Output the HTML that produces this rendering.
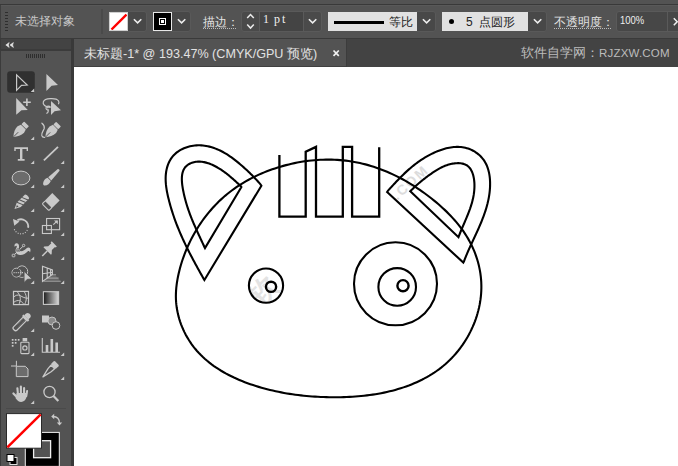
<!DOCTYPE html>
<html><head><meta charset="utf-8">
<style>
*{margin:0;padding:0;box-sizing:border-box}
html,body{width:678px;height:466px;overflow:hidden;background:#535353;font-family:"Liberation Sans",sans-serif;position:relative}
.a{position:absolute}
#topband{left:0;top:0;width:678px;height:5px;background:#535353;border-bottom:1px solid #393939}
#bar{left:0;top:5px;width:678px;height:33px;background:#535353;border-top:1px solid #595959}
#barb{left:0;top:38px;width:678px;height:1px;background:#3a3a3a}
#lhead{left:0;top:39px;width:71px;height:10px;background:#434343}
#lheadb{left:0;top:49px;width:71px;height:2px;background:#3b3b3b}
#lpanel{left:0;top:51px;width:71px;height:415px;background:#535353}
#gutter{left:71px;top:39px;width:3px;height:427px;background:#393939}
#tabbar{left:74px;top:39px;width:604px;height:28px;background:#535353}
#canvas{left:74px;top:67px;width:604px;height:399px;background:#fff}
.txt{color:#d0d0d0;font-size:12px;line-height:14px;white-space:nowrap}
</style></head><body>
<div class="a" id="topband"></div>
<div class="a" id="bar"></div>
<div class="a" id="barb"></div>
<div class="a" id="lhead"></div>
<div class="a" id="lheadb"></div>
<div class="a" id="lpanel"></div>
<div class="a" id="gutter"></div>
<div class="a" id="tabbar"></div>
<div class="a" id="canvas"></div>
<!--DRAW-->
<svg class="a" style="left:0;top:0" width="678" height="466" viewBox="0 0 678 466">
<g font-family="Liberation Sans, sans-serif" font-weight="bold" fill="#e3e3e3" text-anchor="middle">
<text x="0" y="0" font-size="14" letter-spacing="1.8" transform="translate(413.5,186) rotate(-42)" fill="#dcdcdc">.COM</text>
<clipPath id="eyeclip"><circle cx="266" cy="285.6" r="16.5"/></clipPath><g clip-path="url(#eyeclip)"><text x="0" y="0" font-size="28" font-weight="900" transform="translate(270,298) rotate(-45)" fill="#e3e3e3">软</text></g>
</g>
<g fill="none" stroke="#000" stroke-width="2.1" stroke-linejoin="miter">
<path d="M274.99,168.40 L277.74,167.51 L280.50,166.67 L283.27,165.87 L286.06,165.12 L288.86,164.41 L291.67,163.75 L294.49,163.14 L297.32,162.57 L300.16,162.06 L303.00,161.58 L305.85,161.16 L308.71,160.79 L311.57,160.47 L314.43,160.20 L317.30,159.97 L320.17,159.80 L323.03,159.68 L325.90,159.62 L328.77,159.60 L331.63,159.64 L334.49,159.73 L337.34,159.88 L340.19,160.08 L343.04,160.33 L345.87,160.64 L348.70,161.01 L351.52,161.43 L354.33,161.91 L357.12,162.44 L359.91,163.03 L362.68,163.68 L365.45,164.38 L368.20,165.13 L370.93,165.93 L373.66,166.79 L376.37,167.69 L379.06,168.65 L381.74,169.65 L384.41,170.70 L387.05,171.79 L389.69,172.94 L392.30,174.12 L394.90,175.35 L397.48,176.63 L400.05,177.95 L402.59,179.30 L405.12,180.70 L407.63,182.14 L410.11,183.62 L412.58,185.13 L415.03,186.68 L417.45,188.27 L419.86,189.90 L422.24,191.56 L424.60,193.25 L426.93,194.97 L429.25,196.73 L431.54,198.52 L433.80,200.34 L436.04,202.18 L438.25,204.06 L440.44,205.97 L442.59,207.91 L444.71,209.88 L446.79,211.88 L448.83,213.92 L450.83,215.99 L452.79,218.09 L454.70,220.23 L456.57,222.40 L458.38,224.61 L460.15,226.86 L461.85,229.14 L463.50,231.46 L465.09,233.82 L466.62,236.22 L468.08,238.65 L469.48,241.13 L470.81,243.65 L472.06,246.21 L473.25,248.81 L474.36,251.44 L475.39,254.11 L476.35,256.81 L477.22,259.54 L478.02,262.29 L478.74,265.06 L479.37,267.86 L479.92,270.67 L480.39,273.50 L480.76,276.35 L481.05,279.20 L481.25,282.05 L481.35,284.92 L481.37,287.78 L481.29,290.65 L481.13,293.51 L480.87,296.37 L480.53,299.22 L480.11,302.06 L479.60,304.89 L479.00,307.71 L478.33,310.52 L477.57,313.30 L476.74,316.07 L475.83,318.82 L474.84,321.54 L473.78,324.23 L472.65,326.90 L471.44,329.53 L470.16,332.14 L468.81,334.71 L467.40,337.24 L465.91,339.73 L464.37,342.18 L462.76,344.59 L461.08,346.95 L459.34,349.27 L457.55,351.53 L455.69,353.75 L453.78,355.91 L451.81,358.01 L449.79,360.05 L447.71,362.04 L445.58,363.96 L443.41,365.81 L441.18,367.60 L438.90,369.33 L436.59,371.00 L434.23,372.60 L431.83,374.14 L429.39,375.63 L426.92,377.05 L424.42,378.42 L421.89,379.73 L419.33,380.98 L416.75,382.18 L414.13,383.33 L411.50,384.42 L408.84,385.46 L406.16,386.44 L403.46,387.38 L400.73,388.27 L397.99,389.11 L395.23,389.90 L392.45,390.64 L389.66,391.34 L386.85,392.00 L384.03,392.61 L381.20,393.18 L378.35,393.71 L375.50,394.19 L372.64,394.64 L369.76,395.04 L366.88,395.41 L364.00,395.75 L361.11,396.04 L358.21,396.30 L355.31,396.53 L352.41,396.73 L349.51,396.89 L346.61,397.02 L343.72,397.12 L340.82,397.19 L337.93,397.23 L335.04,397.25 L332.16,397.24 L329.29,397.20 L326.42,397.14 L323.56,397.06 L320.71,396.95 L317.87,396.81 L315.03,396.65 L312.19,396.46 L309.37,396.24 L306.54,395.99 L303.72,395.71 L300.90,395.41 L298.09,395.07 L295.28,394.71 L292.47,394.31 L289.66,393.88 L286.85,393.42 L284.04,392.92 L281.23,392.40 L278.42,391.83 L275.61,391.23 L272.79,390.60 L269.98,389.93 L267.16,389.23 L264.34,388.48 L261.52,387.70 L258.70,386.88 L255.90,386.02 L253.10,385.11 L250.31,384.17 L247.54,383.18 L244.79,382.15 L242.05,381.07 L239.34,379.95 L236.65,378.78 L233.98,377.57 L231.35,376.30 L228.75,374.99 L226.18,373.63 L223.64,372.21 L221.15,370.75 L218.70,369.23 L216.29,367.66 L213.93,366.03 L211.62,364.35 L209.36,362.61 L207.15,360.81 L205.00,358.96 L202.90,357.05 L200.87,355.08 L198.90,353.04 L197.00,350.95 L195.17,348.79 L193.41,346.57 L191.72,344.30 L190.10,341.96 L188.57,339.57 L187.11,337.13 L185.73,334.64 L184.43,332.11 L183.22,329.53 L182.09,326.92 L181.05,324.27 L180.10,321.58 L179.24,318.87 L178.48,316.13 L177.81,313.37 L177.23,310.58 L176.76,307.78 L176.38,304.96 L176.11,302.13 L175.94,299.29 L175.88,296.45 L175.92,293.60 L176.06,290.75 L176.28,287.90 L176.60,285.06 L176.99,282.21 L177.47,279.37 L178.01,276.54 L178.62,273.72 L179.29,270.91 L180.02,268.11 L180.81,265.32 L181.65,262.55 L182.54,259.80 L183.49,257.07 L184.48,254.35 L185.54,251.65 L186.64,248.98 L187.79,246.32 L189.00,243.69 L190.25,241.09 L191.56,238.51 L192.91,235.96 L194.31,233.43 L195.76,230.93 L197.26,228.47 L198.80,226.03 L200.40,223.63 L202.03,221.26 L203.72,218.92 L205.45,216.62 L207.22,214.36 L209.04,212.13 L210.90,209.95 L212.80,207.80 L214.74,205.70 L216.73,203.63 L218.76,201.62 L220.83,199.64 L222.94,197.71 L225.09,195.83 L227.28,194.00 L229.51,192.22 L231.78,190.48 L234.08,188.80 L236.42,187.16 L238.80,185.58 L241.21,184.05 L243.65,182.56 L246.12,181.12 L248.62,179.73 L251.15,178.39 L253.71,177.10 L256.29,175.85 L258.90,174.65 L261.53,173.49 L264.18,172.38 L266.86,171.32 L269.55,170.30 L272.27,169.33 L274.99,168.40Z"/>
<path d="M261.40,185.70 L204.40,280.00 L203.60,278.66 L202.79,277.23 L201.98,275.80 L201.18,274.37 L200.38,272.94 L199.58,271.52 L198.79,270.10 L198.01,268.68 L197.22,267.26 L196.45,265.84 L195.67,264.43 L194.91,263.01 L194.14,261.60 L193.39,260.19 L192.63,258.77 L191.89,257.36 L191.15,255.95 L190.41,254.53 L189.68,253.12 L188.96,251.70 L188.25,250.28 L187.54,248.86 L186.83,247.44 L186.14,246.02 L185.45,244.59 L184.77,243.17 L184.09,241.74 L183.42,240.30 L182.76,238.87 L182.11,237.43 L181.47,235.98 L180.83,234.53 L180.20,233.08 L179.58,231.63 L178.97,230.17 L178.37,228.70 L177.77,227.23 L177.19,225.75 L176.61,224.27 L176.05,222.78 L175.49,221.29 L174.94,219.79 L174.40,218.28 L173.87,216.77 L173.36,215.25 L172.85,213.72 L172.35,212.19 L171.86,210.65 L171.39,209.10 L170.92,207.54 L170.46,205.97 L170.02,204.39 L169.59,202.81 L169.16,201.22 L168.75,199.61 L168.36,198.00 L167.97,196.38 L167.61,194.75 L167.27,193.12 L166.95,191.48 L166.66,189.84 L166.40,188.20 L166.17,186.56 L165.98,184.92 L165.83,183.29 L165.72,181.65 L165.66,180.02 L165.64,178.40 L165.68,176.79 L165.77,175.18 L165.91,173.58 L166.12,172.00 L166.39,170.43 L166.72,168.87 L167.11,167.34 L167.57,165.84 L168.10,164.37 L168.69,162.93 L169.35,161.54 L170.08,160.18 L170.88,158.88 L171.76,157.62 L172.70,156.42 L173.72,155.28 L174.80,154.20 L175.95,153.17 L177.15,152.21 L178.41,151.30 L179.72,150.46 L181.08,149.68 L182.48,148.96 L183.93,148.30 L185.41,147.71 L186.92,147.18 L188.45,146.71 L190.02,146.31 L191.60,145.98 L193.20,145.71 L194.81,145.51 L196.43,145.37 L198.06,145.31 L199.68,145.31 L201.31,145.38 L202.93,145.51 L204.55,145.71 L206.16,145.96 L207.76,146.28 L209.35,146.64 L210.93,147.06 L212.50,147.53 L214.05,148.05 L215.59,148.61 L217.10,149.22 L218.60,149.86 L220.07,150.55 L221.53,151.27 L222.96,152.02 L224.38,152.81 L225.77,153.63 L227.15,154.48 L228.51,155.36 L229.85,156.26 L231.18,157.19 L232.50,158.13 L233.79,159.10 L235.08,160.09 L236.35,161.09 L237.61,162.11 L238.85,163.14 L240.09,164.18 L241.31,165.23 L242.53,166.28 L243.73,167.35 L244.92,168.42 L246.11,169.50 L247.28,170.59 L248.44,171.69 L249.59,172.79 L250.73,173.91 L251.86,175.03 L252.98,176.16 L254.08,177.30 L255.18,178.44 L256.26,179.60 L257.34,180.76 L258.40,181.93 L259.45,183.12 L260.48,184.31 L261.40,185.70Z"/>
<path d="M241.40,187.00 L205.00,248.10 L204.52,247.19 L204.08,246.23 L203.63,245.27 L203.19,244.31 L202.74,243.36 L202.30,242.41 L201.86,241.46 L201.42,240.52 L200.99,239.59 L200.55,238.65 L200.12,237.72 L199.69,236.79 L199.26,235.87 L198.83,234.94 L198.40,234.02 L197.98,233.10 L197.56,232.19 L197.14,231.27 L196.72,230.36 L196.31,229.44 L195.90,228.53 L195.49,227.62 L195.09,226.70 L194.69,225.79 L194.29,224.88 L193.89,223.97 L193.50,223.05 L193.12,222.14 L192.73,221.22 L192.35,220.31 L191.98,219.39 L191.60,218.47 L191.24,217.54 L190.87,216.62 L190.51,215.69 L190.16,214.76 L189.81,213.83 L189.46,212.89 L189.12,211.95 L188.79,211.01 L188.46,210.06 L188.13,209.11 L187.81,208.15 L187.49,207.19 L187.18,206.23 L186.88,205.26 L186.58,204.28 L186.29,203.30 L186.00,202.31 L185.72,201.32 L185.45,200.32 L185.18,199.32 L184.91,198.30 L184.66,197.29 L184.41,196.26 L184.17,195.23 L183.93,194.18 L183.70,193.13 L183.48,192.08 L183.26,191.01 L183.06,189.94 L182.86,188.86 L182.67,187.78 L182.50,186.69 L182.34,185.61 L182.21,184.52 L182.09,183.44 L181.99,182.37 L181.92,181.30 L181.87,180.25 L181.85,179.20 L181.86,178.17 L181.90,177.15 L181.98,176.15 L182.09,175.17 L182.24,174.21 L182.43,173.27 L182.66,172.36 L182.93,171.47 L183.25,170.61 L183.61,169.78 L184.03,168.98 L184.50,168.22 L185.02,167.49 L185.60,166.81 L186.23,166.16 L186.91,165.55 L187.65,164.98 L188.43,164.45 L189.25,163.97 L190.11,163.53 L191.00,163.13 L191.93,162.77 L192.88,162.47 L193.85,162.20 L194.84,161.98 L195.85,161.81 L196.87,161.69 L197.90,161.62 L198.93,161.59 L199.97,161.61 L201.01,161.68 L202.05,161.79 L203.08,161.94 L204.12,162.14 L205.16,162.36 L206.19,162.63 L207.22,162.92 L208.24,163.25 L209.25,163.61 L210.26,163.99 L211.26,164.40 L212.26,164.83 L213.24,165.28 L214.21,165.75 L215.17,166.24 L216.11,166.74 L217.04,167.26 L217.96,167.79 L218.86,168.32 L219.75,168.87 L220.62,169.42 L221.48,169.98 L222.33,170.56 L223.17,171.14 L223.99,171.73 L224.81,172.32 L225.61,172.93 L226.41,173.54 L227.20,174.16 L227.99,174.78 L228.76,175.41 L229.53,176.05 L230.30,176.69 L231.06,177.34 L231.81,177.99 L232.57,178.65 L233.32,179.31 L234.07,179.98 L234.81,180.65 L235.56,181.33 L236.31,182.00 L237.05,182.68 L237.80,183.37 L238.56,184.05 L239.31,184.74 L240.07,185.43 L240.83,186.12 L241.40,187.00Z"/>
<path d="M387.10,192.10 L463.30,262.60 L464.00,261.21 L464.53,259.82 L465.08,258.44 L465.63,257.06 L466.20,255.67 L466.78,254.29 L467.37,252.92 L467.97,251.54 L468.58,250.16 L469.19,248.79 L469.82,247.41 L470.44,246.03 L471.07,244.66 L471.71,243.28 L472.35,241.91 L472.99,240.53 L473.63,239.15 L474.27,237.77 L474.91,236.39 L475.55,235.01 L476.19,233.63 L476.83,232.24 L477.46,230.85 L478.08,229.46 L478.70,228.07 L479.31,226.68 L479.92,225.28 L480.51,223.88 L481.10,222.47 L481.68,221.07 L482.24,219.65 L482.79,218.24 L483.33,216.82 L483.86,215.39 L484.37,213.96 L484.86,212.53 L485.34,211.09 L485.80,209.65 L486.25,208.20 L486.67,206.74 L487.07,205.28 L487.46,203.82 L487.82,202.34 L488.15,200.86 L488.47,199.38 L488.76,197.89 L489.02,196.39 L489.26,194.88 L489.47,193.36 L489.65,191.84 L489.80,190.31 L489.92,188.77 L490.02,187.23 L490.08,185.67 L490.10,184.12 L490.09,182.56 L490.04,181.01 L489.95,179.46 L489.82,177.92 L489.64,176.39 L489.42,174.87 L489.15,173.37 L488.84,171.88 L488.47,170.42 L488.05,168.97 L487.58,167.55 L487.05,166.16 L486.46,164.80 L485.81,163.47 L485.10,162.18 L484.33,160.93 L483.49,159.71 L482.59,158.54 L481.63,157.42 L480.61,156.34 L479.54,155.31 L478.42,154.33 L477.26,153.40 L476.05,152.53 L474.81,151.72 L473.53,150.96 L472.23,150.27 L470.89,149.63 L469.54,149.07 L468.16,148.57 L466.77,148.14 L465.36,147.77 L463.94,147.47 L462.51,147.24 L461.06,147.07 L459.61,146.95 L458.14,146.90 L456.67,146.90 L455.19,146.95 L453.71,147.06 L452.22,147.23 L450.73,147.44 L449.23,147.69 L447.74,148.00 L446.25,148.35 L444.76,148.74 L443.27,149.17 L441.78,149.64 L440.30,150.15 L438.83,150.70 L437.36,151.27 L435.90,151.89 L434.45,152.53 L433.02,153.20 L431.59,153.89 L430.18,154.62 L428.78,155.36 L427.40,156.13 L426.03,156.92 L424.69,157.72 L423.36,158.54 L422.05,159.38 L420.77,160.23 L419.50,161.09 L418.25,161.97 L417.03,162.86 L415.82,163.76 L414.63,164.67 L413.45,165.60 L412.29,166.53 L411.15,167.48 L410.01,168.44 L408.89,169.41 L407.79,170.39 L406.69,171.38 L405.61,172.38 L404.53,173.39 L403.46,174.41 L402.40,175.45 L401.35,176.49 L400.30,177.54 L399.26,178.59 L398.23,179.66 L397.19,180.74 L396.16,181.82 L395.13,182.92 L394.10,184.02 L393.07,185.12 L392.05,186.24 L391.01,187.36 L389.98,188.49 L388.94,189.63 L387.90,190.78 L387.10,192.10Z"/>
<path d="M410.30,191.20 L458.50,237.20 L458.84,236.26 L459.16,235.38 L459.50,234.50 L459.84,233.62 L460.19,232.75 L460.54,231.87 L460.90,230.99 L461.26,230.12 L461.62,229.24 L461.99,228.37 L462.36,227.49 L462.74,226.61 L463.11,225.73 L463.49,224.86 L463.87,223.98 L464.25,223.10 L464.63,222.22 L465.00,221.34 L465.38,220.45 L465.76,219.57 L466.13,218.69 L466.50,217.80 L466.87,216.91 L467.24,216.02 L467.60,215.13 L467.96,214.24 L468.31,213.34 L468.66,212.45 L469.01,211.55 L469.34,210.65 L469.67,209.74 L470.00,208.84 L470.31,207.93 L470.62,207.02 L470.92,206.10 L471.21,205.19 L471.49,204.27 L471.77,203.34 L472.03,202.42 L472.28,201.49 L472.52,200.55 L472.75,199.62 L472.96,198.68 L473.17,197.73 L473.36,196.78 L473.53,195.83 L473.70,194.88 L473.84,193.92 L473.98,192.95 L474.10,191.98 L474.20,191.01 L474.28,190.03 L474.35,189.05 L474.40,188.06 L474.44,187.07 L474.45,186.07 L474.45,185.07 L474.43,184.07 L474.39,183.06 L474.32,182.06 L474.23,181.06 L474.13,180.07 L473.99,179.09 L473.84,178.11 L473.65,177.15 L473.44,176.21 L473.21,175.28 L472.94,174.37 L472.65,173.48 L472.33,172.61 L471.98,171.77 L471.60,170.96 L471.18,170.17 L470.74,169.42 L470.26,168.71 L469.74,168.03 L469.19,167.38 L468.61,166.78 L467.98,166.22 L467.32,165.71 L466.63,165.24 L465.89,164.82 L465.11,164.45 L464.30,164.13 L463.45,163.86 L462.58,163.64 L461.67,163.46 L460.74,163.32 L459.79,163.23 L458.83,163.17 L457.84,163.16 L456.85,163.18 L455.84,163.24 L454.83,163.33 L453.82,163.46 L452.80,163.61 L451.79,163.80 L450.79,164.02 L449.79,164.26 L448.81,164.53 L447.83,164.82 L446.88,165.13 L445.93,165.47 L445.00,165.83 L444.08,166.21 L443.17,166.60 L442.27,167.02 L441.39,167.45 L440.51,167.89 L439.65,168.35 L438.79,168.83 L437.94,169.31 L437.11,169.81 L436.28,170.32 L435.45,170.83 L434.64,171.36 L433.83,171.89 L433.03,172.42 L432.24,172.97 L431.45,173.51 L430.67,174.06 L429.89,174.61 L429.12,175.16 L428.36,175.72 L427.60,176.27 L426.84,176.84 L426.09,177.40 L425.34,177.97 L424.59,178.54 L423.85,179.12 L423.12,179.70 L422.39,180.29 L421.66,180.88 L420.93,181.48 L420.21,182.08 L419.49,182.69 L418.77,183.31 L418.05,183.93 L417.34,184.56 L416.63,185.19 L415.92,185.83 L415.21,186.48 L414.50,187.13 L413.80,187.80 L413.10,188.47 L412.39,189.15 L411.69,189.83 L410.99,190.53 L410.30,191.20Z"/>
<path d="M279.4,155 L279.4,216.7 L305.7,216.7 L305.7,151.7 L316,146.9 L316,216.7 L342.8,216.7 L342.8,146.9 L352.1,146.9 L352.1,216.7 L379.2,216.7 L379.2,147.2" stroke-width="2.3"/>
<circle cx="266" cy="285.6" r="17.1"/>
<circle cx="271.05" cy="286.8" r="5.1" stroke-width="2.4"/>
<circle cx="395.5" cy="283.8" r="41.5"/>
<circle cx="397.2" cy="286.9" r="18.8"/>
<circle cx="403" cy="285.7" r="5.6" stroke-width="2.4"/>
</g></svg>
<!--/DRAW-->

<!--UI-->
<div class="a" style="left:0;top:5px;width:1px;height:33px;background:#3f3f3f"></div>
<div class="a" style="left:5px;top:12px;width:3px;height:20px;background:repeating-linear-gradient(#2e2e2e 0 1px,transparent 1px 3px)"></div>
<div class="a txt" style="left:15px;top:14px;color:#c8c8c8">未选择对象</div>
<div class="a" style="left:101px;top:9px;width:2px;height:25px;background:#4a4a4a"></div>
<!-- fill swatch -->
<div class="a" style="left:108px;top:11px;width:39px;height:21px;border-radius:3px;background:#484848;border:1px solid #595959"></div>
<div class="a" style="left:108.5px;top:12px;width:19.5px;height:19px;background:#fff;border:1px solid #cfcfcf;overflow:hidden">
<svg width="18" height="18" style="position:absolute;left:0;top:0"><line x1="1.5" y1="16.5" x2="16.5" y2="1.5" stroke="#f00" stroke-width="2.4"/></svg></div>
<svg class="a" style="left:133px;top:18px" width="10" height="7"><polyline points="0.9,1.2 4.6,4.9 8.3,1.2" fill="none" stroke="#ededed" stroke-width="1.6"/></svg>
<!-- stroke swatch -->
<div class="a" style="left:153px;top:11px;width:38px;height:21px;border-radius:3px;background:#484848;border:1px solid #595959"></div>
<div class="a" style="left:153px;top:12px;width:19px;height:19px;background:#000;border:1px solid #e8e8e8"></div>
<div class="a" style="left:158.8px;top:17.7px;width:7.4px;height:7.4px;border:1.3px solid #fff"></div>
<div class="a" style="left:161px;top:19.9px;width:3px;height:3px;background:#fff"></div>
<svg class="a" style="left:177px;top:18px" width="10" height="7"><polyline points="0.9,1.2 4.6,4.9 8.3,1.2" fill="none" stroke="#ededed" stroke-width="1.6"/></svg>
<!-- stroke weight -->
<div class="a txt" style="left:203px;top:15px;color:#e4e4e4">描边：</div>
<div class="a" style="left:203px;top:28px;width:34px;height:1px;background:repeating-linear-gradient(90deg,#bbb 0 1px,transparent 1px 2px)"></div>
<div class="a" style="left:241px;top:11px;width:81px;height:21px;border-radius:3px;background:#4a4a4a;border:1px solid #5a5a5a"></div>
<div class="a" style="left:259px;top:12px;width:45px;height:19px;background:#444"></div>
<div class="a" style="left:303px;top:12px;width:1px;height:19px;background:#5a5a5a"></div>
<div class="a" style="left:259px;top:12px;width:1px;height:19px;background:#5a5a5a"></div>
<svg class="a" style="left:245px;top:13px" width="11" height="17"><polyline points="2.2,5 5.5,1.5 8.8,5" fill="none" stroke="#ececec" stroke-width="1.5"/><polyline points="2.2,11.5 5.5,15.1 8.8,11.5" fill="none" stroke="#ececec" stroke-width="1.5"/></svg>
<div class="a txt" style="left:263px;top:12px;font-family:'Liberation Serif',serif;color:#f0f0f0;font-size:12px">1</div><div class="a txt" style="left:274px;top:12px;font-family:'Liberation Serif',serif;color:#f0f0f0;font-size:12px">p</div><div class="a txt" style="left:282px;top:12px;font-family:'Liberation Serif',serif;color:#f0f0f0;font-size:12px">t</div>
<svg class="a" style="left:308px;top:18px" width="10" height="7"><polyline points="0.9,1.2 4.6,4.9 8.3,1.2" fill="none" stroke="#ededed" stroke-width="1.6"/></svg>
<!-- profile -->
<div class="a" style="left:414px;top:11px;width:22px;height:21px;border-radius:3px;background:#484848;border:1px solid #595959"></div>
<div class="a" style="left:328px;top:12px;width:89px;height:19px;background:#e1e1e1"></div>
<div class="a" style="left:334px;top:20.5px;width:50px;height:3.5px;background:#000"></div>
<div class="a txt" style="left:389px;top:15px;color:#222">等比</div>
<svg class="a" style="left:422px;top:18px" width="10" height="7"><polyline points="0.9,1.2 4.6,4.9 8.3,1.2" fill="none" stroke="#ededed" stroke-width="1.6"/></svg>
<!-- brush -->
<div class="a" style="left:525px;top:11px;width:22px;height:21px;border-radius:3px;background:#484848;border:1px solid #595959"></div>
<div class="a" style="left:442px;top:12px;width:86px;height:19px;background:#e1e1e1"></div>
<div class="a" style="left:449px;top:19px;width:5px;height:5px;border-radius:50%;background:#000"></div>
<div class="a txt" style="left:466px;top:15px;color:#222">5 &nbsp;点圆形</div>
<svg class="a" style="left:533px;top:18px" width="10" height="7"><polyline points="0.9,1.2 4.6,4.9 8.3,1.2" fill="none" stroke="#ededed" stroke-width="1.6"/></svg>
<!-- opacity -->
<div class="a txt" style="left:554px;top:15px;color:#e4e4e4">不透明度：</div>
<div class="a" style="left:554px;top:28px;width:57px;height:1px;background:repeating-linear-gradient(90deg,#bbb 0 1px,transparent 1px 2px)"></div>
<div class="a" style="left:616px;top:11px;width:70px;height:21px;border-radius:3px;background:#474747;border:1px solid #5a5a5a"></div>
<div class="a" style="left:667px;top:12px;width:1px;height:20px;background:#5a5a5a"></div>
<div class="a txt" style="left:620px;top:13px;color:#eee;font-size:11px;transform:scaleX(0.86);transform-origin:0 0">100%</div>
<svg class="a" style="left:672px;top:17px" width="6" height="10"><polyline points="1.8,1.2 5.2,4.7 1.8,8.2" fill="none" stroke="#f0f0f0" stroke-width="1.5"/></svg>
<!-- tab bar -->
<div class="a" style="left:74px;top:66px;width:604px;height:1px;background:#404040"></div>
<div class="a" style="left:346px;top:39px;width:332px;height:28px;background:#434343;border-left:1px solid #3c3c3c"></div>
<div class="a txt" style="left:84px;top:47px;font-size:12.6px;color:#e2e2e2">未标题-1* @ 193.47% (CMYK/GPU 预览)</div>
<svg class="a" style="left:332px;top:49px" width="8" height="8"><path d="M1.5,1.5 L6.8,6.8 M6.8,1.5 L1.5,6.8" stroke="#f2f2f2" stroke-width="1.7"/></svg>
<div class="a txt" style="left:521px;top:46px;font-size:12.5px;color:#bcbcbc">软件自学网：</div><div class="a txt" style="left:599px;top:46px;font-size:11.5px;color:#bcbcbc;letter-spacing:0.2px;-webkit-font-smoothing:antialiased">RJZXW.COM</div>
<!-- left panel header -->
<svg class="a" style="left:5px;top:41px" width="10" height="8"><path d="M0.8,4 L4.2,1.6 L3.4,4 L4.2,6.4Z M5,4 L8.4,1.6 L7.6,4 L8.4,6.4Z" fill="#e6e6e6" stroke="#e6e6e6" stroke-width="0.6" stroke-linejoin="round"/></svg>
<div class="a" style="left:0;top:39px;width:1px;height:427px;background:#3b3b3b"></div>
<div class="a" style="left:26px;top:54px;width:19px;height:4px;background:repeating-linear-gradient(90deg,#2e2e2e 0 1px,transparent 1px 2px)"></div>
<!--TOOLS-->
<svg class="a" style="left:0;top:0" width="72" height="466" viewBox="0 0 72 466">
<g fill="#c9c9c9">
<!-- corner triangles -->
<path d="M34.2,88.6 V92.1 H30.7Z"/>
<path d="M34.2,136.6 V140.1 H30.7Z"/>
<path d="M34.2,160.6 V164.1 H30.7Z"/><path d="M64.2,160.6 V164.1 H60.7Z"/>
<path d="M34.2,184.6 V188.1 H30.7Z"/><path d="M64.2,184.6 V188.1 H60.7Z"/>
<path d="M34.2,208.6 V212.1 H30.7Z"/><path d="M64.2,208.6 V212.1 H60.7Z"/>
<path d="M34.2,232.6 V236.1 H30.7Z"/><path d="M64.2,232.6 V236.1 H60.7Z"/>
<path d="M34.2,256.6 V260.1 H30.7Z"/><path d="M64.2,256.6 V260.1 H60.7Z"/>
<path d="M34.2,280.6 V284.1 H30.7Z"/><path d="M64.2,280.6 V284.1 H60.7Z"/>
<path d="M34.2,328.6 V332.1 H30.7Z"/>
<path d="M34.2,352.6 V356.1 H30.7Z"/><path d="M64.2,352.6 V356.1 H60.7Z"/>
<path d="M64.2,376.6 V380.1 H60.7Z"/>
<path d="M34.2,400.6 V404.1 H30.7Z"/>
</g>
<rect x="7.2" y="71.2" width="27.6" height="21.5" rx="3" fill="#303030"/>
<path d="M34.2,88.6 V92.1 H30.7Z" fill="#c9c9c9"/>
<!-- selection -->
<path d="M16.6,74.9 L27.2,85 L21.5,85.4 L16.6,90.3Z" fill="none" stroke="#c9c9c9" stroke-width="1.2" stroke-linejoin="miter"/>
<!-- direct selection -->
<path d="M46.4,74.1 L58,85.1 L51.6,85.7 L46.4,91Z" fill="#c9c9c9"/>
<!-- group selection -->
<path d="M16.2,97.9 L27.8,110 L21.5,110.3 L16.2,114.7Z" fill="#c9c9c9"/>
<path d="M26.9,98.5 V106 M23.2,102.2 H30.8" stroke="#c9c9c9" stroke-width="1.6"/>
<!-- lasso -->
<path d="M51,101 L61,110.2 L54.6,111.2 L51,114.9Z" fill="#c9c9c9"/>
<path d="M50.5,107.3 C45,107 42.5,104.5 43.3,101.8 C44.5,98 56,97.5 58.5,100.8 C59.3,102 58.8,103.5 58.4,104.2" fill="none" stroke="#c9c9c9" stroke-width="1.2"/>
<path d="M50.5,107.3 C49.5,105.8 46.5,105.6 46,107.6 C45.6,109.3 47.5,110.4 49,109.8 M48,110.2 C48.6,111.6 48,112.8 46.4,113.6" fill="none" stroke="#c9c9c9" stroke-width="1.1"/><circle cx="47.7" cy="107.8" r="0.7" fill="#c9c9c9"/>
<!-- pen -->
<g transform="translate(13.4,137) rotate(45)">
<rect x="-3.4" y="-18.6" width="6.8" height="3.9" rx="0.7" fill="#c9c9c9"/>
<path d="M-3.4,-14.1 H3.4 L4.6,-10.5 C4.6,-6.5 2.8,-3 0,0 C-2.8,-3 -4.6,-6.5 -4.6,-10.5Z" fill="#c9c9c9"/>
<path d="M0,-6.8 V-0.3" stroke="#535353" stroke-width="0.9"/>
</g>
<!-- curvature pen -->
<g transform="translate(45.4,137.2) rotate(45)">
<rect x="-3.4" y="-18.6" width="6.8" height="3.9" rx="0.7" fill="#c9c9c9"/>
<path d="M-3.4,-14.1 H3.4 L4.6,-10.5 C4.6,-6.5 2.8,-3 0,0 C-2.8,-3 -4.6,-6.5 -4.6,-10.5Z" fill="#c9c9c9"/>
<path d="M0,-6.8 V-0.3" stroke="#535353" stroke-width="0.9"/>
</g>
<path d="M41.9,123.2 C43.5,124.5 44.8,126 44.2,128.5 C43.3,131 41.2,133 41.8,135.5 C42.2,137 43.5,137.5 44.6,137.4" fill="none" stroke="#c9c9c9" stroke-width="1.2" stroke-linecap="round"/>
<!-- type -->
<path d="M14.3,147.2 H28 V151 H26.6 V149.1 H22.4 V159.1 H24.6 V160.7 H17.8 V159.1 H20 V149.1 H15.7 V151 H14.3Z" fill="#c9c9c9"/>
<!-- line -->
<path d="M43.9,160.4 L58,146.9" stroke="#c9c9c9" stroke-width="1.8"/>
<!-- ellipse -->
<ellipse cx="21" cy="178" rx="8.9" ry="6.9" fill="#6c6c6c" stroke="#c9c9c9" stroke-width="1"/>
<!-- paintbrush -->
<g transform="translate(43.6,185) rotate(45)" fill="#c9c9c9">
<path d="M-0.6,0 C-3,-1.8 -3.6,-5 -2.3,-7.9 L2.3,-7.9 C3.6,-5 3,-1.8 0.6,0Z"/>
<path d="M-2.2,-8.7 L2.2,-8.7 L1.3,-21 C1.2,-22.2 -1.2,-22.2 -1.3,-21Z"/>
</g>
<!-- pencil/shaper striped -->
<g transform="translate(21,202.6) rotate(45)">
<path d="M-2.9,-8.2 C-2.9,-9.8 2.9,-9.8 2.9,-8.2 V3.2 L0,9.2 L-2.9,3.2Z" fill="#c9c9c9"/>
<path d="M-3.2,-4.2 L3.2,-6.8 M-3.2,-0.8 L3.2,-3.4 M-3.2,2.6 L3.2,0" stroke="#535353" stroke-width="1"/>
<path d="M-1.2,4.6 L0,7 L1.2,4.6Z" fill="#535353"/>
</g>
<!-- eraser -->
<g transform="translate(52.3,200.45) rotate(45)">
<rect x="-5.2" y="-5.2" width="10.4" height="10.4" fill="#c9c9c9"/>
<rect x="-4.7" y="5" width="9.4" height="4.6" rx="1" fill="none" stroke="#c9c9c9" stroke-width="1.1"/>
</g>
<!-- rotate -->
<path d="M17.4,220.3 A7.2,7.2 0 0 1 28.1,227.75" fill="none" stroke="#c9c9c9" stroke-width="1.8"/>
<path d="M27.3,230.1 A7.2,7.2 0 0 1 14,228.4" fill="none" stroke="#c9c9c9" stroke-width="1.1" stroke-dasharray="1 1.5"/>
<path d="M13,219 L19.5,221.5 L14.3,225.8Z" fill="#c9c9c9"/>
<!-- scale -->
<rect x="46.6" y="218.5" width="13" height="11.2" fill="none" stroke="#c9c9c9" stroke-width="1.1"/>
<rect x="42.4" y="225.5" width="9" height="8" fill="none" stroke="#c9c9c9" stroke-width="1.1"/>
<path d="M53.3,224.6 L57.3,220.9" stroke="#c9c9c9" stroke-width="1.2"/>
<path d="M57.8,220.5 L57.8,224.3 L54,220.5Z" fill="#c9c9c9"/>
<!-- puppet warp -->
<path d="M14.6,246.8 C14,244.5 15.3,243 17,243.3 C18.6,243.6 19.3,245.3 19,247.2 C18.8,248.6 18.6,249.6 19.2,250.5 C20.2,251.6 22.3,251.3 24,250.3 C25.8,249.2 27,247.4 28.6,247.5 C30.6,247.7 31,250.3 30,252.6 C29.5,251.2 28.6,250.7 27.6,251.5 C25.8,253.4 23,255.2 20,255 C16.8,254.8 15.2,252.4 15.6,249.8 C15.8,248.8 16.4,247.8 16.8,247 C17,246.2 16.6,245.6 16,245.7 C15.4,245.8 15,246.3 14.6,246.8Z" fill="#c9c9c9"/>
<path d="M13.6,255.4 L24,245.3" stroke="#c9c9c9" stroke-width="1"/>
<rect x="12.2" y="254.2" width="2.7" height="2.6" rx="0.6" fill="#535353" stroke="#c9c9c9" stroke-width="0.9"/>
<circle cx="18.1" cy="250.2" r="1.9" fill="#535353"/>
<circle cx="18.1" cy="250.2" r="1.2" fill="none" stroke="#c9c9c9" stroke-width="0.7"/>
<circle cx="23.6" cy="245.5" r="1.2" fill="#535353" stroke="#c9c9c9" stroke-width="0.9"/>
<!-- pin -->
<g transform="translate(47.5,250.7) rotate(45)">
<path d="M-3.6,-9.6 H3.6 V-8 H2.6 V-3.6 L5.3,-0.6 V0.4 H-5.3 V-0.6 L-2.6,-3.6 V-8 H-3.6Z" fill="#c9c9c9"/>
<path d="M0,0.4 V7.4" stroke="#c9c9c9" stroke-width="1.5"/>
</g>
<!-- shape builder -->
<circle cx="16.4" cy="272.6" r="4.4" fill="none" stroke="#c9c9c9" stroke-width="1"/>
<circle cx="22" cy="271.6" r="5.7" fill="none" stroke="#c9c9c9" stroke-width="1"/>
<circle cx="16.4" cy="272.6" r="3.9" fill="#535353"/>
<circle cx="22" cy="271.6" r="5.2" fill="#535353"/>
<path d="M19.6,269.3 A4.4,4.4 0 0 1 19.6,275.9" fill="none" stroke="#c9c9c9" stroke-width="0.9"/>
<path d="M13.6,272.6 H23.5" stroke="#c9c9c9" stroke-width="1.1" stroke-dasharray="1 1.1"/>
<path d="M24.1,271.3 L32,279 L27.3,279.3 L24.1,282.6Z" fill="#c9c9c9" stroke="#535353" stroke-width="0.8"/>
<!-- perspective grid -->
<path d="M52.4,274.3 L55,274.6 L60.5,281.4 L43.5,281.6Z" fill="#666"/>
<path d="M50.5,274.8 H56 M46.5,278.1 H58.6 M43.5,281.3 H60.8" stroke="#9c9c9c" stroke-width="1.1"/>
<path d="M42.5,266.2 L52.4,270 L52.4,274.4 L42.5,281.5Z M47.2,268 V278.1 M50.6,269.3 V275.7 M42.5,273.8 L52.4,272.2" fill="none" stroke="#c9c9c9" stroke-width="1.1"/>
<!-- mesh -->
<rect x="13.5" y="291.4" width="15" height="13.2" fill="none" stroke="#c9c9c9" stroke-width="1.2"/>
<path d="M17,291.5 C19,293.5 20.3,296 20.3,298.5 C20.3,301 19.6,303 18.8,304.8 M13.5,297.2 C15.5,295.3 18,294.3 20.2,295.6 C22.5,297 24.8,298.3 28.5,298.2 M24.2,291.5 C25.9,294 26.6,297 26.2,300 C25.9,302 25.2,303.5 24.4,304.8 M13.5,302.6 C15.6,300.6 18.2,300 20.3,301 C22,301.8 23.2,303 23.8,304.8" fill="none" stroke="#c9c9c9" stroke-width="1"/>
<!-- gradient -->
<defs><linearGradient id="gr" x1="0" x2="1"><stop offset="0" stop-color="#1c1c1c"/><stop offset="1" stop-color="#d8d8d8"/></linearGradient></defs>
<rect x="43.4" y="291.7" width="15.2" height="12.7" fill="url(#gr)" stroke="#c9c9c9" stroke-width="1.1"/>
<!-- eyedropper -->
<g transform="translate(21.7,322) rotate(45)">
<path d="M-2.9,-6.5 V-9 C-2.9,-12.3 2.9,-12.3 2.9,-9 V-6.5Z" fill="#c9c9c9"/>
<rect x="-4.1" y="-6.8" width="8.2" height="2.4" rx="0.5" fill="#c9c9c9"/>
<path d="M-2.4,-4.4 H2.4 V9.2 C2.4,11.6 -2.4,11.6 -2.4,9.2Z" fill="none" stroke="#c9c9c9" stroke-width="1.2"/>
<path d="M-1.1,-3.5 V5 M1.1,-3.5 V5" stroke="#8a8a8a" stroke-width="0.7" stroke-dasharray="0.8 0.8"/>
</g>
<!-- blend -->
<rect x="42" y="315.5" width="7" height="7" fill="#c9c9c9"/>
<circle cx="52" cy="321" r="4" fill="#8a8a8a" stroke="#c9c9c9" stroke-width="0.9"/>
<circle cx="56" cy="325.5" r="3.8" fill="#535353" stroke="#c9c9c9" stroke-width="1"/>
<!-- symbol sprayer -->
<g fill="#c9c9c9"><rect x="11.8" y="339" width="1.7" height="1.7"/><rect x="14.8" y="339" width="1.7" height="1.7"/><rect x="17.8" y="339" width="1.7" height="1.7"/><rect x="11.8" y="342" width="1.7" height="1.7"/><rect x="14.8" y="342" width="1.7" height="1.7"/><rect x="11.8" y="345" width="1.7" height="1.7"/><rect x="22.6" y="338" width="4.6" height="3.3"/></g>
<rect x="20.8" y="342.3" width="8.2" height="11.3" rx="0.8" fill="none" stroke="#c9c9c9" stroke-width="1.1"/>
<circle cx="24.9" cy="347.9" r="2.1" fill="none" stroke="#c9c9c9" stroke-width="1.2"/>
<!-- column graph -->
<path d="M42.3,338 V352.3 H60" fill="none" stroke="#c9c9c9" stroke-width="1.1"/>
<rect x="45.7" y="345" width="2.6" height="7" fill="#c9c9c9"/>
<rect x="50.5" y="339" width="2.6" height="13" fill="#c9c9c9"/>
<rect x="55.4" y="342.5" width="2.6" height="9.5" fill="#c9c9c9"/>
<!-- artboard -->
<path d="M16.4,360.8 V366 M11,366 H16.4" stroke="#c9c9c9" stroke-width="1"/>
<path d="M16.3,366.3 H25.3 L28,369 V376.6 H16.3Z" fill="#6c6c6c" stroke="#c9c9c9" stroke-width="1"/>
<!-- slice/knife -->
<g transform="translate(42.5,377.3) rotate(45)">
<rect x="-3.4" y="-20.2" width="6.8" height="5.2" rx="1" fill="#c9c9c9"/>
<path d="M-2.6,-14.6 H2.6 L2.2,-10 L0,-0.6 L-2.2,-10Z" fill="none" stroke="#c9c9c9" stroke-width="1.25" stroke-linejoin="round"/>
</g>
<!-- hand -->
<g stroke="#c9c9c9" stroke-linecap="round" fill="none">
<path d="M17.4,388.2 L17.9,394" stroke-width="2.1"/>
<path d="M20.9,386.6 V394" stroke-width="2.1"/>
<path d="M24.1,388 V394" stroke-width="2.1"/>
<path d="M27.1,391 L26.3,396" stroke-width="2"/>
<path d="M13.4,393.5 L17.5,397.6" stroke-width="2.2"/>
</g>
<path d="M16.6,393 H27.2 L26.4,397.5 C25.6,400.3 23.6,401.9 21.2,401.9 C18.8,401.9 17.3,400.4 15.6,398.2 Z" fill="#c9c9c9"/>
<!-- zoom -->
<circle cx="49.5" cy="392" r="5.6" fill="none" stroke="#c9c9c9" stroke-width="1.3"/>
<path d="M53.5,396 L58.3,401" stroke="#c9c9c9" stroke-width="2.2"/>
<!-- separator -->
<rect x="6" y="408" width="60" height="1" fill="#4a4a4a"/>
<!-- stroke swatch -->
<rect x="25.3" y="432.4" width="34" height="34" fill="#000" stroke="#f0f0f0" stroke-width="1"/>
<rect x="33.6" y="440.7" width="17" height="17" fill="#535353" stroke="#f0f0f0" stroke-width="1.3"/>
<!-- fill swatch -->
<rect x="6.5" y="413.6" width="35" height="34.6" fill="#fff" stroke="#2a2a2a" stroke-width="1"/>
<path d="M7.3,447.4 L40.7,414.4" stroke="#f00" stroke-width="2.5"/>
<!-- swap arrow -->
<path d="M53,416.5 C57,416.5 59.5,418.5 59.5,423.5" fill="none" stroke="#c9c9c9" stroke-width="1.3"/>
<path d="M51.2,416.5 L54.2,413.8 V419.2Z M59.5,425.6 L56.8,422.6 H62.2Z" fill="#c9c9c9"/>
<!-- default icon -->
<rect x="10" y="457.5" width="7" height="7" fill="#000" stroke="#e0e0e0" stroke-width="1"/>
<rect x="7" y="454.5" width="7" height="7" fill="#fff" stroke="#000" stroke-width="1"/>
</svg>
<!--/TOOLS-->
</body></html>
